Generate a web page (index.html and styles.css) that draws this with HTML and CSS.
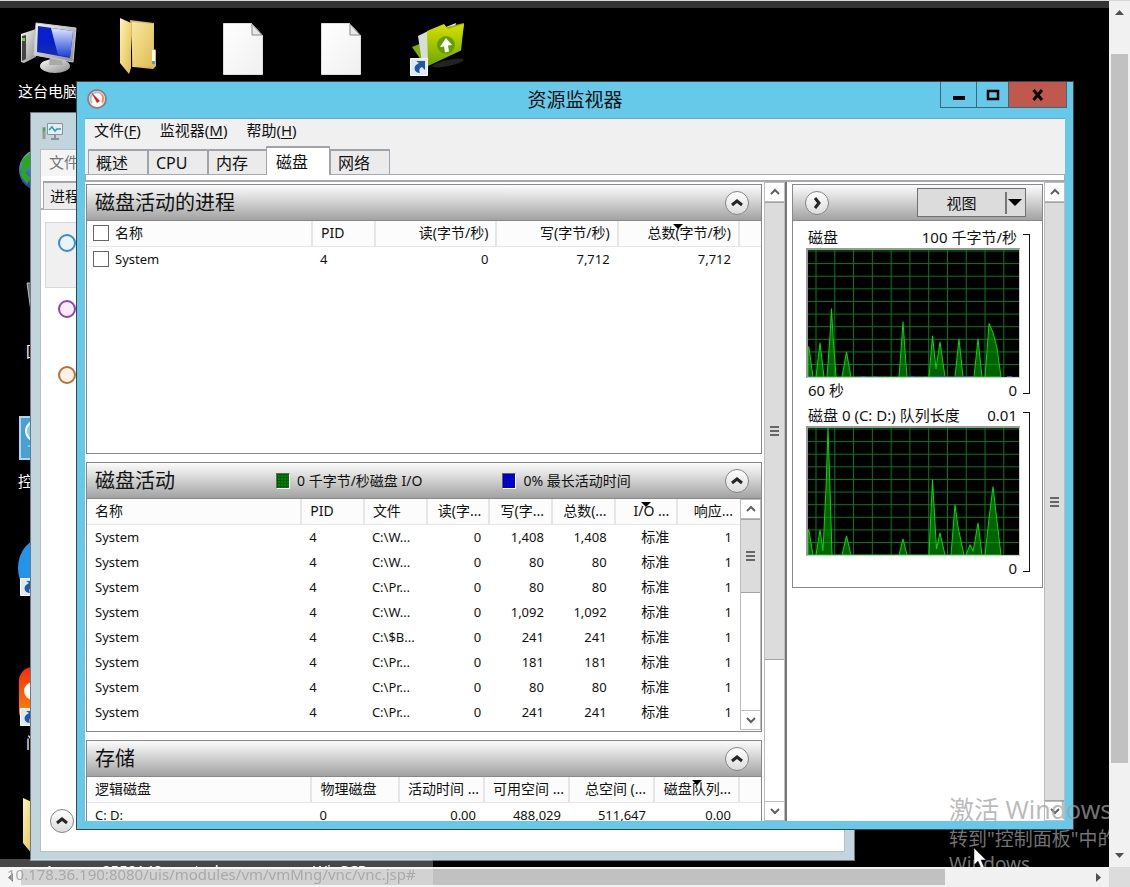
FILE: index.html
```html
<!DOCTYPE html>
<html lang="zh-CN">
<head>
<meta charset="utf-8">
<title>资源监视器</title>
<link rel="stylesheet" href="styles.css">
</head>
<body>
<svg width="0" height="0" class="defs" aria-hidden="true">
  <defs>
    <linearGradient id="screen" x1="0" y1="0" x2="0" y2="1"><stop offset="0" stop-color="#0a1fd0"/><stop offset=".5" stop-color="#0820c8"/><stop offset="1" stop-color="#1a30b0"/></linearGradient>
    <linearGradient id="glare" x1="0" y1="0" x2="0" y2="1"><stop offset="0" stop-color="#dce6ff"/><stop offset="1" stop-color="#1c3fd4"/></linearGradient>
    <linearGradient id="metal" x1="0" y1="0" x2="1" y2="1"><stop offset="0" stop-color="#fafafa"/><stop offset="1" stop-color="#8c8c8c"/></linearGradient>
    <linearGradient id="gold" x1="0" y1="0" x2="1" y2="1"><stop offset="0" stop-color="#fff3b4"/><stop offset="1" stop-color="#e3bd4e"/></linearGradient>
    <linearGradient id="lime" x1="0" y1="0" x2="0" y2="1"><stop offset="0" stop-color="#d8e000"/><stop offset="1" stop-color="#68a800"/></linearGradient>
    <linearGradient id="paper" x1="0" y1="0" x2="1" y2="1"><stop offset="0" stop-color="#ffffff"/><stop offset="1" stop-color="#f0f0f0"/></linearGradient>
    <linearGradient id="flame" x1="0" y1="0" x2="0" y2="1"><stop offset="0" stop-color="#f52a10"/><stop offset="1" stop-color="#ff9a00"/></linearGradient>
    <linearGradient id="globe" x1="0" y1="0" x2="0" y2="1"><stop offset="0" stop-color="#6fb7e8"/><stop offset="1" stop-color="#20309a"/></linearGradient>
    <symbol id="shortcut" viewBox="0 0 18 18"><path fill="#dfe9f0" stroke="#f8f8f8" d="M.5.5h17v17H.5z"/><path fill="#1f58a8" d="M6 3h9v9l-3-3c-3 1-3 4-2 6-5 0-7-5-4-8 1-1 2-1 3-2z"/></symbol>
    <symbol id="folder" viewBox="0 0 40 58"><path fill="#d9b95c" d="M12 3l24 3v26l2 1v16l-3 3-20-2z"/><path fill="url(#gold)" d="M2 1l11 5v45l-2 6L2 46z"/><path fill="url(#gold)" d="M14 5l22 2-1 42-21 1z" opacity=".8"/><path fill="#fff" d="M34 33h3v13h-3z"/><path fill="#4aa0e0" d="M34 44h3v3h-3z"/></symbol>
    <symbol id="file" viewBox="0 0 40 52"><path fill="url(#paper)" stroke="#ddd" d="M.5.5h28l11 12v39H.5z"/><path fill="#e8e8e8" stroke="#888" d="M29 1v11h10z"/></symbol>
    <symbol id="up" viewBox="0 0 10 10"><path d="M1 7l4-4 4 4" fill="none" stroke="#606060" stroke-width="2"/></symbol>
    <symbol id="down" viewBox="0 0 10 10"><path d="M1 3l4 4 4-4" fill="none" stroke="#606060" stroke-width="2"/></symbol>
    <symbol id="fold" viewBox="0 0 22 22"><path d="M6 13l5-4 5 4" fill="none" stroke="#262626" stroke-width="3"/></symbol>
    <pattern id="grid" width="18.780" height="12.520" patternUnits="userSpaceOnUse" x="7.500" y="13"><path d="M.5 0v13M0 .5h19" stroke="#087a1c" fill="none"/></pattern>
  </defs>
</svg>
<main class="viewer">
  <section class="desktop">
    <svg class="icon computer" viewBox="0 0 58 54" role="img" aria-label="这台电脑"><path fill="url(#metal)" d="M1 12l15-5v28L4 41l-3-1z"/><path fill="#444" d="M2 14l4-1v24l-4 2z"/><path fill="#5be428" d="M2 16h3v3H2z"/><ellipse cx="35" cy="44" rx="15" ry="7" fill="url(#metal)"/><path fill="#aaa" d="M30 34h11l2 9H29z"/><path fill="url(#metal)" stroke="#ccc" d="M16 1l40 5-3 34-39-7z"/><path fill="url(#screen)" d="M18 4l35 5-3 27-33-6z"/><path fill="url(#glare)" d="M31 6l22 3-3 26-12-2z"/></svg>
    <span class="label pc-label">这台电脑</span>
    <svg class="icon folder-top"><use href="#folder"/></svg>
    <svg class="icon file-a"><use href="#file"/></svg>
    <svg class="icon file-b"><use href="#file"/></svg>
    <svg class="icon upload" viewBox="0 0 56 56"><ellipse cx="38" cy="41" rx="16" ry="3" fill="#222" transform="rotate(-12 38 41)"/><path fill="#7fb000" d="M2 25l10-4 6 27z"/><path fill="#d8dcdc" d="M8 14l10-5v35l-6-4z"/><path fill="#e8ece8" d="M31 7l15-6-2 8z"/><path fill="#97b800" d="M20 9L54 1l-3 28z"/><path fill="url(#lime)" d="M17 9l17-7 4 5 16-5-4 27-32 15z"/><circle cx="36" cy="23" r="9" fill="#659d08"/><path fill="#fff" d="M36 16l6 7-4 .5 1 6-4 1-1-6-4 .5z"/></svg>
    <svg class="icon upload-link"><use href="#shortcut"/></svg>
    <svg class="icon globe" viewBox="0 0 42 42"><circle cx="21" cy="21" r="21" fill="url(#globe)"/><path fill="#28a820" d="M3 11L14 1l5 12-8 3-5 8 6 5-4 6-6-8z"/></svg>
    <svg class="icon bin" viewBox="0 0 20 54"><path fill="#777" stroke="#bbb" d="M1 1h18v50H8z"/></svg>
    <span class="label bin-label">回收站</span>
    <svg class="icon control" viewBox="0 0 44 44"><path fill="#4a9fd4" stroke="#a8d8f4" stroke-width="2" d="M1 1h42v42H1z"/><circle cx="17" cy="15" r="10" fill="#8cc8ec" stroke="#eefaff" stroke-width="2"/><path stroke="#50e8f0" stroke-width="2" d="M9 30h20"/></svg>
    <span class="label control-label">控制面板</span>
    <svg class="icon browser" viewBox="0 0 50 56"><ellipse cx="25" cy="28" rx="25" ry="30" fill="#2394ec"/></svg>
    <svg class="icon browser-link"><use href="#shortcut"/></svg>
    <svg class="icon orange" viewBox="0 0 50 58"><rect width="50" height="58" rx="14" fill="url(#flame)"/><circle cx="14" cy="24" r="9" fill="#fff"/></svg>
    <svg class="icon orange-link"><use href="#shortcut"/></svg>
    <span class="label orange-label">门户</span>
    <svg class="icon folder-low"><use href="#folder"/></svg>
    <span class="label low-a">1</span><span class="label low-b">0550140_control</span><span class="label low-c">WinSCP</span>

    <section class="window task-manager" aria-label="任务管理器">
      <header class="tm-title"><svg viewBox="0 0 22 18" width="22" height="18"><path fill="#e8ecee" stroke="#8a9498" d="M5.500.5h15v11h-15z"/><path d="M7 7l3-3 3 4 2-2h4" fill="none" stroke="#20a0c0" stroke-width="1.500"/><path stroke="#8a9498" stroke-width="2" d="M13 12v4M9 16h8"/><path stroke="#999" stroke-width="3" d="M2 4v12"/><path stroke="#30b830" stroke-width="2" d="M2 5v3"/></svg></header>
      <div class="tm-client">
        <div class="tm-menu">文件</div>
        <div class="tm-tabs"><button class="tm-tab">进程</button></div>
        <div class="tm-list">
          <div class="tm-item chosen"><i class="dot blue"></i></div>
          <div class="tm-item"><i class="dot purple"></i></div>
          <div class="tm-item"><i class="dot brown"></i></div>
        </div>
        <button class="round tm-fold" aria-label="简略信息"><svg width="22" height="22"><use href="#fold"/></svg></button>
      </div>
    </section>

    <section class="window monitor" aria-label="资源监视器">
      <header class="titlebar">
        <svg class="app" viewBox="0 0 20 20" width="20" height="20"><circle cx="10" cy="10" r="9" fill="#fafafa" stroke="#8d8080" stroke-width="2"/><path d="M5 14a6.500 6.500 0 1 1 10 0" fill="none" stroke="#bbb" stroke-width="2"/><path d="M15 6q2 3 0 7" fill="none" stroke="#f09030" stroke-width="1.500"/><path fill="#d42020" d="M4 3l9 9-3 2z"/></svg>
        <h1>资源监视器</h1>
        <div class="caption">
          <button class="min" aria-label="最小化"><svg viewBox="0 0 14 12" width="14" height="12"><path d="M1 7h12v4H1z"/></svg></button>
          <button class="max" aria-label="最大化"><svg viewBox="0 0 14 12" width="14" height="12"><path d="M2 2h10v8H2z" fill="none" stroke="#000" stroke-width="2.500"/></svg></button>
          <button class="close" aria-label="关闭"><svg viewBox="0 0 12 12" width="12" height="12"><path d="M1.500 1l8.500 10M10 1L1.500 11" stroke="#000" stroke-width="3"/></svg></button>
        </div>
      </header>
      <div class="client">
        <nav class="menu"><button>文件(<u>F</u>)</button><button>监视器(<u>M</u>)</button><button>帮助(<u>H</u>)</button></nav>
        <div class="tabs" role="tablist"><button role="tab">概述</button><button role="tab">CPU</button><button role="tab">内存</button><button role="tab" class="active" aria-selected="true">磁盘</button><button role="tab">网络</button></div>
        <div class="strip"></div>
        <div class="content">
          <div class="panels">
            <section class="panel processes">
              <header class="bar"><h2>磁盘活动的进程</h2><button class="round" aria-label="折叠"><svg width="22" height="22"><use href="#fold"/></svg></button></header>
              <table>
                <colgroup><col><col class="c-pid"><col class="c-rate"><col class="c-rate"><col class="c-rate"><col class="c-end"></colgroup>
                <thead><tr><th><label><input type="checkbox">名称</label></th><th>PID</th><th class="r">读(字节/秒)</th><th class="r">写(字节/秒)</th><th class="r sorted">总数(字节/秒)</th><th></th></tr></thead>
                <tbody><tr><td><label><input type="checkbox">System</label></td><td>4</td><td class="r">0</td><td class="r">7,712</td><td class="r">7,712</td><td></td></tr></tbody>
              </table>
            </section>
            <section class="panel activity">
              <header class="bar"><h2>磁盘活动</h2><span class="legend io"><i class="swatch green"></i>0 千字节/秒磁盘 I/O</span><span class="legend busy"><i class="swatch navy"></i>0% 最长活动时间</span><button class="round" aria-label="折叠"><svg width="22" height="22"><use href="#fold"/></svg></button></header>
              <div class="scroller">
                <div class="table-clip">
                <table>
                  <colgroup><col><col class="c-act" span="7"></colgroup>
                  <thead><tr><th>名称</th><th>PID</th><th>文件</th><th class="r">读(字...</th><th class="r">写(字...</th><th class="r">总数(...</th><th class="r sorted">I/O ...</th><th class="r">响应...</th></tr></thead>
                  <tbody>
                    <tr><td>System</td><td>4</td><td>C:\W...</td><td class="r">0</td><td class="r">1,408</td><td class="r">1,408</td><td class="r level">标准</td><td class="r">1</td></tr>
                    <tr><td>System</td><td>4</td><td>C:\W...</td><td class="r">0</td><td class="r">80</td><td class="r">80</td><td class="r level">标准</td><td class="r">1</td></tr>
                    <tr><td>System</td><td>4</td><td>C:\Pr...</td><td class="r">0</td><td class="r">80</td><td class="r">80</td><td class="r level">标准</td><td class="r">1</td></tr>
                    <tr><td>System</td><td>4</td><td>C:\W...</td><td class="r">0</td><td class="r">1,092</td><td class="r">1,092</td><td class="r level">标准</td><td class="r">1</td></tr>
                    <tr><td>System</td><td>4</td><td>C:\$B...</td><td class="r">0</td><td class="r">241</td><td class="r">241</td><td class="r level">标准</td><td class="r">1</td></tr>
                    <tr><td>System</td><td>4</td><td>C:\Pr...</td><td class="r">0</td><td class="r">181</td><td class="r">181</td><td class="r level">标准</td><td class="r">1</td></tr>
                    <tr><td>System</td><td>4</td><td>C:\Pr...</td><td class="r">0</td><td class="r">80</td><td class="r">80</td><td class="r level">标准</td><td class="r">1</td></tr>
                    <tr><td>System</td><td>4</td><td>C:\Pr...</td><td class="r">0</td><td class="r">241</td><td class="r">241</td><td class="r level">标准</td><td class="r">1</td></tr>
                  </tbody>
                </table>
                </div>
                <div class="scroll inner"><button aria-label="向上"><svg width="10" height="10"><use href="#up"/></svg></button><div class="thumb"><i class="grip"></i></div><div class="rest"></div><button aria-label="向下"><svg width="10" height="10"><use href="#down"/></svg></button></div>
              </div>
            </section>
            <section class="panel storage">
              <header class="bar"><h2>存储</h2><button class="round" aria-label="折叠"><svg width="22" height="22"><use href="#fold"/></svg></button></header>
              <table>
                <colgroup><col><col class="c-disk"><col class="c-sto" span="4"><col class="c-end"></colgroup>
                <thead><tr><th>逻辑磁盘</th><th>物理磁盘</th><th class="r">活动时间 ...</th><th class="r">可用空间 ...</th><th class="r">总空间 (...</th><th class="r sorted">磁盘队列...</th><th></th></tr></thead>
                <tbody><tr><td>C: D:</td><td>0</td><td class="r">0.00</td><td class="r">488,029</td><td class="r">511,647</td><td class="r">0.00</td><td></td></tr></tbody>
              </table>
            </section>
          </div>
          <div class="scroll left"><button aria-label="向上"><svg width="10" height="10"><use href="#up"/></svg></button><div class="thumb"><i class="grip"></i></div><div class="rest"></div><button aria-label="向下"><svg width="10" height="10"><use href="#down"/></svg></button></div>
          <div class="divider"></div>
          <aside class="charts">
            <section class="panel">
              <header class="bar"><button class="round" aria-label="展开"><svg class="turn" width="22" height="22"><use href="#fold"/></svg></button><button class="view"><span>视图</span><svg viewBox="0 0 20 24" width="20" height="24"><path stroke="#777" stroke-width="2" d="M1 1v22"/><path d="M3 8h14l-7 7z"/></svg></button></header>
              <figure class="chart">
                <div class="plot">
                  <figcaption><span>磁盘</span><span>100 千字节/秒</span></figcaption>
                  <svg class="graph" viewBox="0 0 211 126" preserveAspectRatio="none"><path d="M0 0h211v126H0z"/><path fill="url(#grid)" d="M0 0h211v126H0z"/><path class="area" d="M0 126V96L1 97 5 126H8L12 92 16 126H19L22 85 23.500 58 25 85 28 126H34L38.500 101 43 126H91L93 100 95 71 97 100 99 126H121L124.500 85 128 118 132 91 137 126H147L151 88 155 126H166L170 88 174 126H177L179 100 181 73 185 82 189 97 193 126z"/><path d="M1 125.500h3M53 125.500h5M65 125.500h4M77 125.500h1M102 125.500h4M117 125.500h1M125 125.500h15M147 125.500h18M199 125.500h5" stroke="#3060c8"/></svg>
                  <div class="foot"><span>60 秒</span><span>0</span></div>
                </div>
                <div class="bracket"></div>
              </figure>
              <figure class="chart">
                <div class="plot">
                  <figcaption><span>磁盘 0 (C: D:) 队列长度</span><span>0.01</span></figcaption>
                  <svg class="graph" viewBox="0 0 211 126" preserveAspectRatio="none"><path d="M0 0h211v126H0z"/><path fill="url(#grid)" d="M0 0h211v126H0z"/><path class="area" d="M0 126V101L1 102 5 126H8L12 101 15 122 18 60 20 0 22 60 24 126H34L38.500 107 43 126H91L95 110 99 126H121L124.500 51 128.500 120 132 104 137 126H143L147 76 150 98 156 126H158L162 116 165 122 167 112 170 94 174 126H177L181 90 185 58 188 84 193 126z"/></svg>
                  <div class="foot"><span></span><span>0</span></div>
                </div>
                <div class="bracket"></div>
              </figure>
            </section>
          </aside>
          <div class="scroll right"><button aria-label="向上"><svg width="10" height="10"><use href="#up"/></svg></button><div class="thumb"><i class="grip"></i></div><button aria-label="向下"><svg width="10" height="10"><use href="#down"/></svg></button></div>
        </div>
      </div>
    </section>

    <div class="activate"><p class="big">激活 Windows</p><p>转到"控制面板"中的</p><p>Windows</p></div>
    <svg class="pointer" viewBox="0 0 14 20" width="14" height="20"><path fill="#fff" stroke="#222" stroke-width=".5" d="M1 0v17l4-4 3 7 3-1-3-7h5z"/></svg>
  </section>
  <div class="page-v"><svg width="9" height="5" viewBox="0 0 9 5"><path fill="#505050" d="M0 5l4.500-5L9 5z"/></svg><div class="lead"></div><div class="page-thumb"></div><div class="trail"></div><svg width="9" height="5" viewBox="0 0 9 5"><path fill="#505050" d="M0 0l4.500 5L9 0z"/></svg></div>
  <div class="page-h"><svg width="5" height="9" viewBox="0 0 5 9"><path fill="#505050" d="M5 0L0 4.500 5 9z"/></svg><div class="page-thumb"></div><div class="trail"></div><svg width="5" height="9" viewBox="0 0 5 9"><path fill="#505050" d="M0 0l5 4.500L0 9z"/></svg></div>
  <div class="corner"></div>
</main>
<div class="status">10.178.36.190:8080/uis/modules/vm/vmMng/vnc/vnc.jsp#</div>
</body>
</html>
```

FILE: styles.css
```css
* { box-sizing: border-box; }
body {
  margin: 0;
  font: 14px/20px "Noto Sans", "Noto Sans CJK SC", sans-serif;
  color: #111;
  background: #000;
}
button { font: inherit; color: inherit; padding: 0; margin: 0; border: 0; background: none; }
h1, h2, p, figure { margin: 0; font-weight: 400; }
svg { display: block; }
.defs { position: absolute; }

.viewer {
  height: 100vh;
  display: grid;
  grid-template: 1fr 20px / 1fr 21px;
  border-top: 1px solid #d4d8dc;
  overflow: hidden;
}
.desktop { position: relative; overflow: hidden; background: #000; border-top: 7px solid #333; }

/* page scrollbars */
.page-v { display: flex; flex-direction: column; align-items: center; padding: 9px 2px; background: #f1f1f1; }
.page-v .lead { flex: 39; }
.page-v .page-thumb { flex: 709; width: 100%; background: #c1c1c1; }
.page-v .trail { flex: 90; }
.page-h { display: flex; align-items: center; padding: 2px 8px; gap: 8px; background: #f1f1f1; }
.page-h .page-thumb { flex: 924; align-self: stretch; background: #c1c1c1; }
.page-h .trail { flex: 135; }
.corner { background: #dcdcdc; }
.status {
  position: fixed; left: 0; bottom: 0; width: 433px; height: 28px;
  padding-left: 7px; font-size: 15px; line-height: 30px; color: #a9a9a9;
  background: rgba(255, 255, 255, .28); border-top-right-radius: 3px;
}

/* desktop items */
.icon, .label { position: absolute; }
.label { color: #fff; font-size: 15px; white-space: nowrap; }
.computer { left: 20px; top: 14px; width: 58px; height: 54px; }
.pc-label { left: 18px; top: 73px; }
.folder-top { left: 118px; top: 9px; width: 40px; height: 58px; }
.file-a { left: 223px; top: 15px; width: 40px; height: 52px; }
.file-b { left: 321px; top: 15px; width: 40px; height: 52px; }
.upload { left: 410px; top: 14px; width: 56px; height: 56px; }
.upload-link { left: 410px; top: 50px; width: 18px; height: 18px; }
.globe { left: 19px; top: 141px; width: 42px; height: 42px; }
.bin { left: 26px; top: 274px; width: 20px; height: 54px; }
.bin-label { left: 26px; top: 333px; }
.control { left: 19px; top: 408px; width: 44px; height: 44px; }
.control-label { left: 18px; top: 463px; }
.browser { left: 18px; top: 532px; width: 50px; height: 56px; }
.browser-link { left: 20px; top: 570px; width: 18px; height: 18px; }
.orange { left: 19px; top: 659px; width: 50px; height: 58px; }
.orange-link { left: 20px; top: 700px; width: 18px; height: 18px; }
.orange-label { left: 26px; top: 724px; }
.folder-low { left: 21px; top: 789px; width: 40px; height: 58px; }
.low-a { left: 45px; top: 852px; }
.low-b { left: 102px; top: 852px; }
.low-c { left: 313px; top: 852px; }

/* windows */
.window { position: absolute; display: flex; flex-direction: column; }
.task-manager { left: 30px; top: 104px; right: 254px; bottom: 6px; padding: 0 9px 8px; background: #c3d5dc; border: 1px solid #6d777c; }
.tm-title { height: 36px; padding: 10px 2px; }
.tm-client { flex: 1; display: flex; flex-direction: column; background: #fff; border: 1px solid #b4c0c6; }
.tm-menu { height: 26px; padding: 2px 8px; background: #f4f4f4; color: #777; font-size: 15px; }
.tm-tabs { padding: 5px 2px 0; height: 34px; border-bottom: 2px solid #b0b0b8; }
.tm-tab { width: 60px; height: 28px; padding-left: 6px; text-align: left; font-size: 15px; background: #ececec; border: 2px solid #a4a4ac; border-width: 2px 2px 0 1px; }
.tm-list { padding: 12px 4px; flex: 1; }
.tm-item { height: 66px; padding: 11px 12px; border: 1px solid transparent; }
.chosen { background: #f0f0f0; border-color: #d8d8d8; }
.dot { display: block; width: 18px; height: 18px; border: 2px solid; border-radius: 50%; background: #eaf2fa; }
.blue { border-color: #3c8cc0; }
.purple { border-color: #9040b4; background: #f8ecfc; }
.brown { border-color: #b87038; background: #fdf1e6; }
.tm-fold { margin: 0 0 18px 9px; }

.monitor { left: 76px; top: 73px; right: 35px; bottom: 37px; padding: 0 8px 8px; background: #66c9e9; border: 1px solid #3c4448; }
.titlebar { height: 37px; display: grid; grid-template-columns: 1fr auto 1fr; border-bottom: 1px solid #6ca6c4; }
.app { margin: 7px 2px; }
.titlebar h1 { font-size: 19px; line-height: 36px; }
.caption { justify-self: end; display: flex; height: 26px; margin-right: -2px; border: 1px solid #3d6678; border-top: 0; }
.caption button { display: grid; place-items: center; border-right: 1px solid #3d6678; }
.caption .min { width: 36px; }
.caption .max { width: 32px; }
.caption .close { width: 57px; background: #c0584e; border: 0; }
.client { flex: 1; min-height: 0; display: flex; flex-direction: column; background: #f0f0f0; }
.menu { display: flex; gap: 19px; padding: 1px 9px 2px; font-size: 15px; }
.menu button { line-height: 20px; }
.menu u { text-underline-offset: 2px; }
.tabs { display: flex; align-items: flex-end; height: 32px; padding-left: 3px; font-size: 16px; }
.tabs button { width: 60px; height: 25px; padding-left: 7px; text-align: left; line-height: 22px; background: #ebebeb; border: 2px solid #a2a2aa; border-width: 2px 1px 0 1px; }
.tabs .active { width: 64px; height: 29px; padding-left: 9px; margin: 0 0 -1px -2px; background: #fff; position: relative; }
.strip { height: 8px; background: #fff; border: 2px solid #a8a8b0; border-width: 1px 1px 2px; }
.content { flex: 1; min-height: 0; display: flex; background: #fff; }

.panels { flex: 1; min-width: 0; padding: 2px 2px 0 1px; overflow: hidden; display: flex; flex-direction: column; gap: 8px; }
.panel { border: 1px solid #888; background: #fff; flex: none; }
.processes, .activity { height: 270px; }
.storage { height: 200px; }
.bar { position: relative; display: flex; align-items: center; height: 37px; padding: 0 12px 0 8px; background: linear-gradient(#fbfbfb, #e2e2e2 30%, #a2a2a2); border: 1px solid #888; border-width: 1px 0 1px; margin-top: -1px; }
.bar h2 { font-size: 20px; line-height: 30px; }
.round { display: grid; place-items: center; width: 24px; height: 24px; border: 1px solid #858585; border-radius: 50%; background: linear-gradient(#fff, #dcdcdc); }
.bar .round:last-child { margin-left: auto; }
.legend { display: flex; align-items: center; gap: 7px; }
.io { margin-left: 101px; }
.busy { margin-left: 80px; }
.swatch { width: 14px; height: 16px; border: 1px solid #666; border-right-color: #fff; border-bottom-color: #fff; background-size: 3px 3px; }
.green { background-color: #008200; background-image: linear-gradient(90deg, #005c00 1px, transparent 1px), linear-gradient(#005c00 1px, transparent 1px); }
.navy { background-color: #0000f0; background-image: linear-gradient(90deg, #0000a8 1px, transparent 1px), linear-gradient(#0000a8 1px, transparent 1px); }

table { width: 100%; table-layout: fixed; border-collapse: collapse; font-size: 13px; }
th, td { height: 25px; padding: 0 8px; font-weight: 400; text-align: left; white-space: nowrap; overflow: hidden; line-height: 24px; }
th { position: relative; background: #fcfcfc; border-right: 2px solid #e6e6e6; border-bottom: 1px solid #e6e6e6; font-size: 14px; }
th:last-child { border-right: 0; }
th.r { padding-right: 7px; }
.r { text-align: right; }
td.level { font-size: 14px; }
.sorted::before { content: ""; position: absolute; top: 3px; left: calc(50% - 5px); border: 5px solid transparent; border-top-color: #000; border-bottom: 0; }
.c-pid { width: 63px; }
.c-rate { width: 18%; }
.c-end { width: 22px; }
.c-act { width: 9.6%; }
.c-disk { width: 13%; }
.c-sto { width: 85px; }
label { display: flex; align-items: center; gap: 6px; margin-left: -2px; }
input[type=checkbox] { appearance: none; width: 16px; height: 16px; margin: 0; border: 1px solid #666; background: #fff; }
.scroller { display: flex; height: 231px; }
.table-clip { flex: 1; min-width: 0; overflow: hidden; }

/* window scrollbars */
.scroll { display: flex; flex-direction: column; width: 21px; flex: none; background: #fff; border: 1px solid #bcbcbc; border-width: 0 1px; }
.scroll button { display: grid; place-items: center; height: 20px; flex: none; border: 1px solid #bcbcbc; border-width: 1px 0; }
.thumb { display: grid; place-items: center; background: #dcdcdc; border: 1px solid #a4a4a4; border-width: 1px 0; }
.grip { width: 9px; height: 10px; background: repeating-linear-gradient(#666 0 2px, #dcdcdc 2px 4px); }
.left .thumb { flex: 456; }
.left .rest { flex: 141; }
.right .thumb { flex: 1; }
.inner .thumb { flex: 72; }
.inner .rest { flex: 117; }
.divider { width: 2px; background: #777; }

/* charts */
.charts { flex: none; width: 257px; padding: 2px 1px 0 5px; }
.charts .bar { padding: 0 16px 0 12px; }
.charts .panel { padding-bottom: 7px; }
.view { display: flex; align-items: center; margin-left: auto; width: 109px; height: 29px; background: #dcdcdc; border: 1px solid #707070; font-size: 15px; }
.view span { flex: 1; text-align: center; }
.turn { transform: rotate(90deg); }
.chart { display: flex; align-items: center; padding: 5px 12px 0 13px; font-size: 15px; }
.chart + .chart { padding-top: 2px; }
.plot { flex: 1; min-width: 0; }
.chart figcaption, .foot { display: flex; justify-content: space-between; padding: 0 3px 0 2px; line-height: 22px; }
.foot { height: 24px; line-height: 24px; }
.graph { width: 100%; height: 130px; border: 2px solid #999; border-right: 1px solid #ccc; border-bottom: 1px solid #ccc; }
.area { fill: rgba(0, 160, 0, .62); stroke: #00dc00; }
.bracket { width: 7px; height: 160px; margin-left: 3px; border: 1px solid #111; border-left: 0; }

.activate { position: absolute; left: 949px; bottom: -10px; width: 260px; font-size: 19px; line-height: 25px; color: rgba(160, 160, 160, .72); white-space: nowrap; }
.activate .big { font-size: 25px; line-height: 36px; }
.pointer { position: absolute; left: 973px; top: 840px; }
```
